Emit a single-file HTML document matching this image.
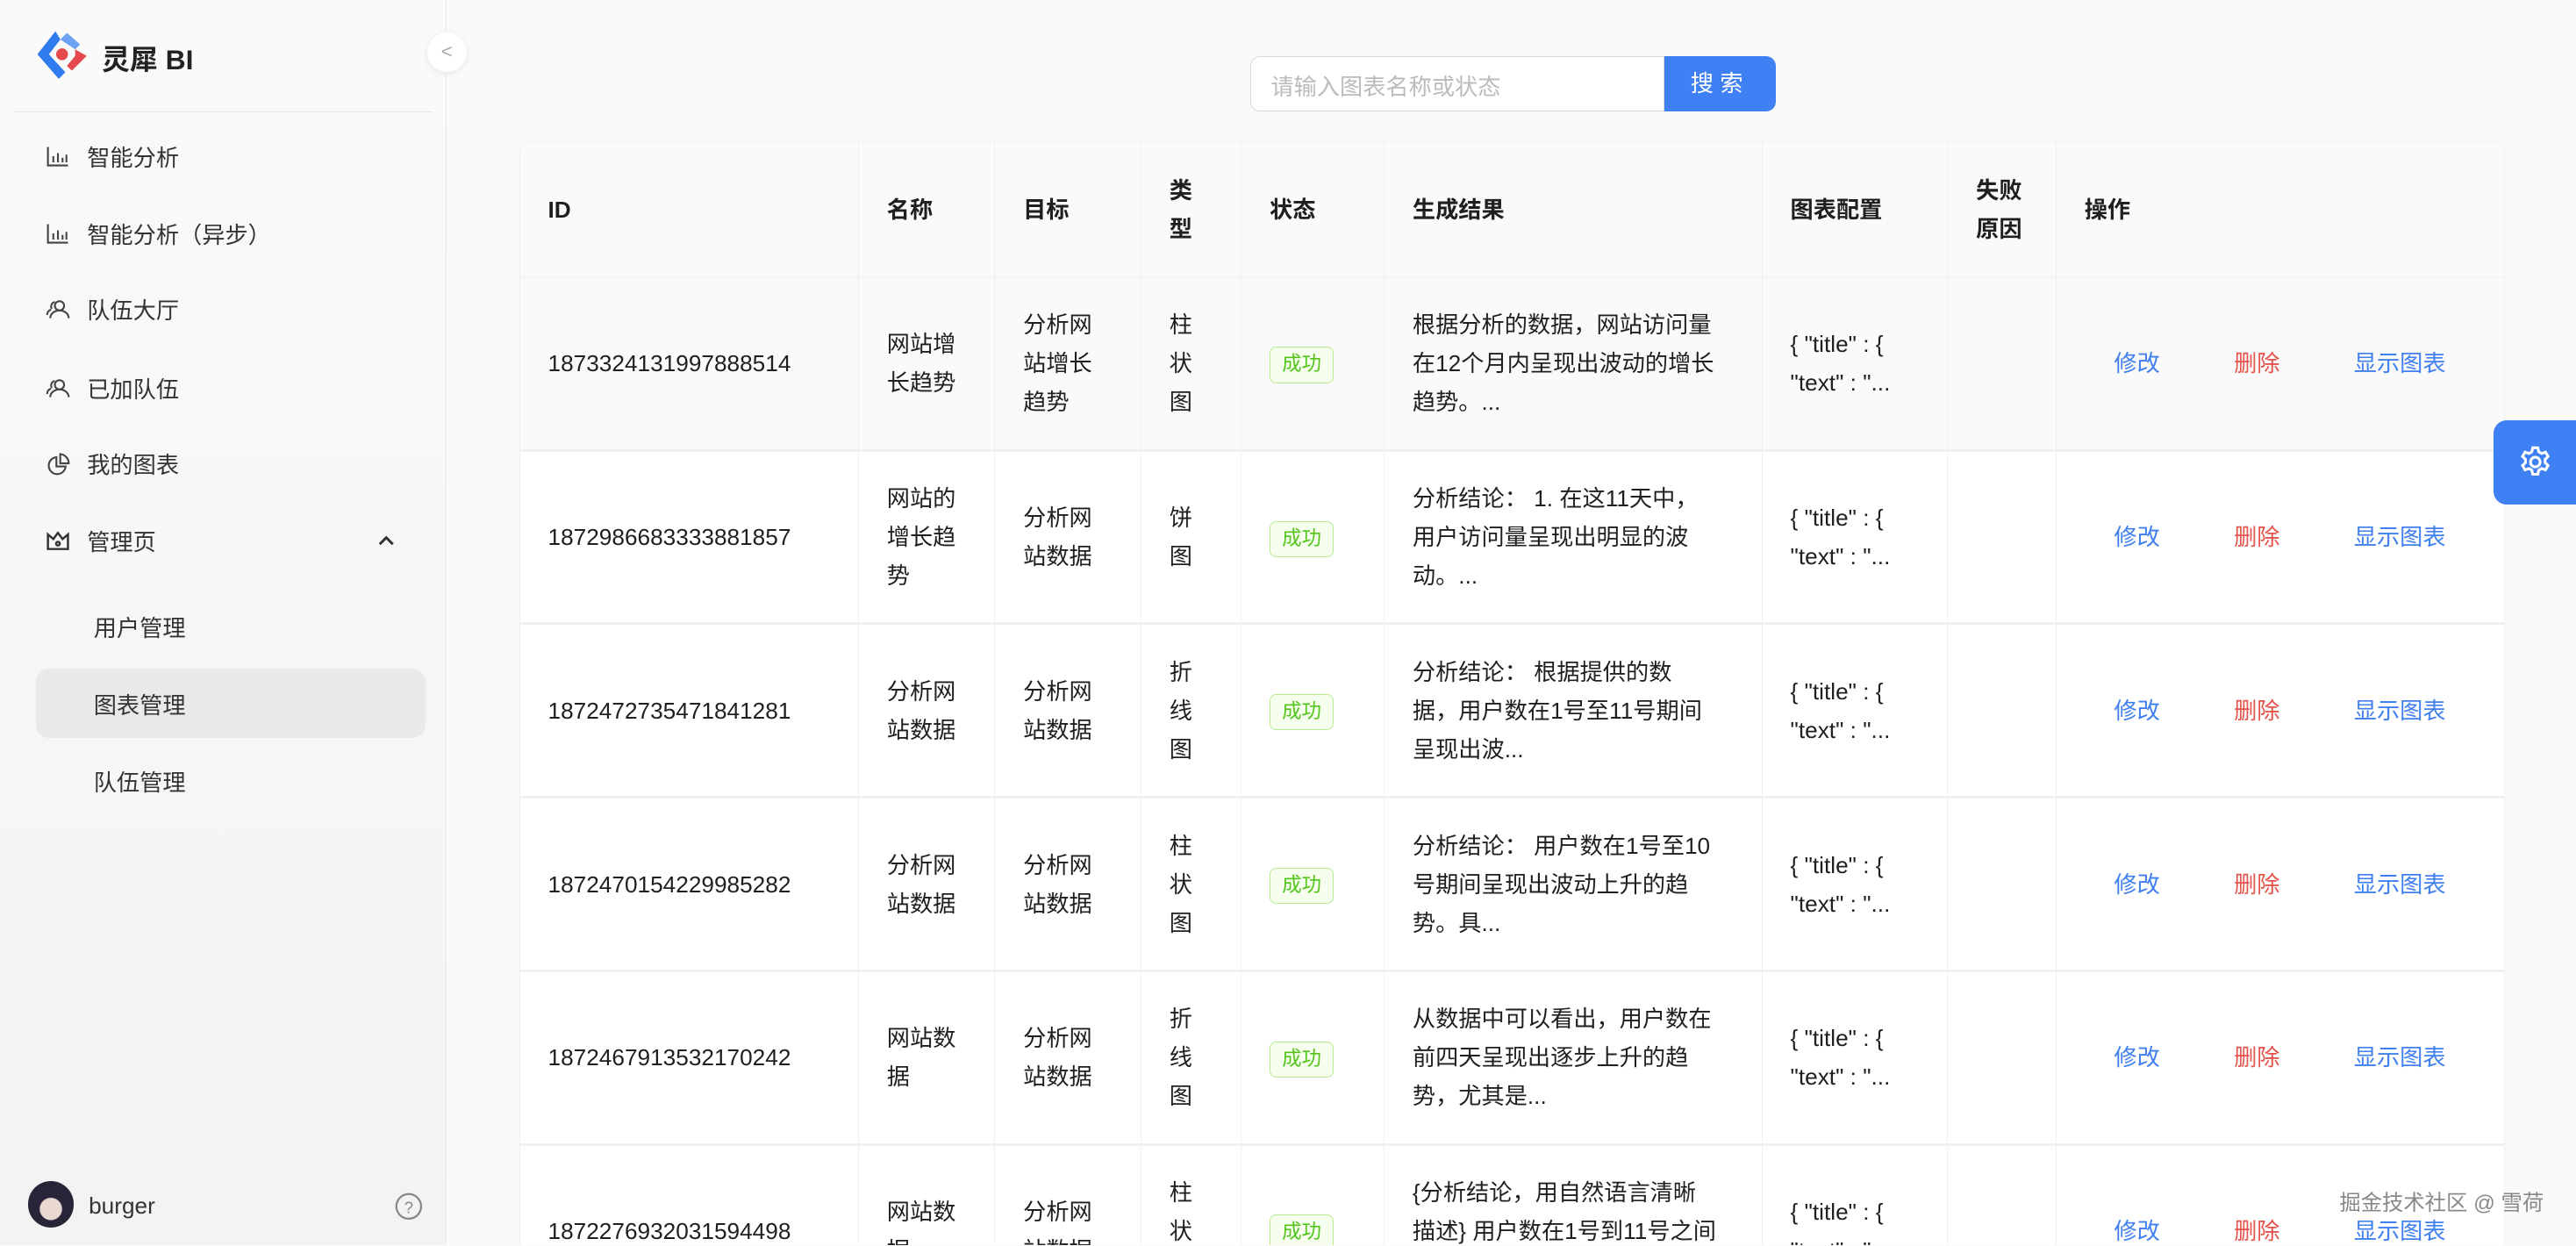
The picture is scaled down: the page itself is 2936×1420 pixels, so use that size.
<!DOCTYPE html>
<html><head><meta charset="utf-8"><style>
html{zoom:1.87245;height:758px;overflow:hidden}
*{box-sizing:border-box;margin:0;padding:0}
body{width:1568px;height:758px;overflow:hidden;position:relative;background:#fafafa;font-family:"Liberation Sans","Noto Sans CJK SC",sans-serif;color:#1f1f1f;font-size:14px}
.side{position:absolute;left:0;top:0;width:272px;height:758px;background:linear-gradient(#fafafa,#f3f3f3);border-right:1px solid #ebebeb}
.logo{position:absolute;left:20px;top:16px}
.brand{position:absolute;left:62px;top:23px;font-size:17px;font-weight:bold;color:#222}
.div{position:absolute;left:8px;right:8px;top:68px;border-top:1px solid #e8e8e8}
.mi{position:absolute;left:28px;height:20px;display:flex;align-items:center;color:#333;font-size:14px}
.mi svg{width:15px;height:15px;margin-right:10px}
.sub{position:absolute;left:57px;color:#333;font-size:14px}
.sel{position:absolute;left:22px;top:407px;width:237px;height:42px;background:#e9e9e9;border-radius:8px}
.coll{position:absolute;left:260px;top:20px;width:24px;height:24px;border-radius:50%;background:#fff;box-shadow:0 1px 4px rgba(0,0,0,.08);color:#aaa;font-size:12px;text-align:center;line-height:23px}
.search{position:absolute;left:761px;top:34px;width:252px;height:34px;border:1px solid #d9d9d9;border-radius:6px 0 0 6px;background:#fff;color:#bbb;font-size:14px;padding:7px 12px}
.btn{position:absolute;left:1013px;top:34px;width:68px;height:34px;background:#4080f5;color:#fff;border-radius:0 6px 6px 0;text-align:center;line-height:34px;font-size:14px;letter-spacing:4px}
.tw{position:absolute;left:316px;top:86px;width:1209px;height:672px;border:1px solid #f0f0f0;border-bottom:none;border-radius:8px 8px 0 0;overflow:hidden;background:#fff}
table{width:1209px;border-collapse:collapse;table-layout:fixed;background:#fff}
th{background:#fafafa;height:82px;text-align:left;font-weight:bold;padding:0 17px;border-right:1px solid #f0f0f0;border-bottom:1px solid #f0f0f0;line-height:23.5px;font-size:14px;color:#1f1f1f}
td{height:105.6px;padding:0 17px;border-right:1px solid #f0f0f0;border-bottom:2px solid #f0f0f0;line-height:23.5px;white-space:nowrap;color:#1f1f1f}
th:last-child,td:last-child{border-right:none}
tr.g td{background:#fafafa}
.tag{display:inline-block;border:1px solid #b7eb8f;background:#f6ffed;color:#52c41a;font-size:12px;height:22px;line-height:20px;padding:0 7px;border-radius:4px}
.ops{padding-left:35px}
.ops span{display:inline-block;margin-right:45px;color:#3f7ff0}
.ops span.r{color:#e5534b}
.gear{position:absolute;left:1518px;top:256px;width:50px;height:51px;background:#4080f5;border-radius:8px 0 0 8px;display:flex;align-items:center;justify-content:center}
.wm{position:absolute;left:1424px;top:722px;color:#888;font-size:13px}
.av{position:absolute;left:17px;top:719px;width:28px;height:28px;border-radius:50%;background:radial-gradient(circle at 50% 60%,#e8d8d0 0 30%,#2a2438 32%)}
</style></head><body>
<div class="side">
 <svg class="logo" width="36" height="36" viewBox="0 0 36 36"><path d="M14 3 L3 17 L16 32 L20 28 L10 17 L17 8 Z" fill="#2f7cf0"/><path d="M17 8 L21 4 L29 11 L26 14 Z" fill="#2f7cf0" opacity=".7"/><path d="M26 14 L33 18 L24 27 L21 24 L26 18 Z" fill="#e5484d"/><circle cx="18" cy="17" r="3.6" fill="#e5484d"/></svg>
 <div class="brand">灵犀 BI</div>
 <div class="div"></div>
 <div class="coll">&lt;</div>
 <div class="mi" style="top:85px"><svg viewBox="0 0 16 16" fill="none" stroke="#444" stroke-width="1.2"><path d="M1.5 2v12h13M5 12V8M8 12V6M11 12V9M13.5 12V7"/></svg>智能分析</div>
 <div class="mi" style="top:132px"><svg viewBox="0 0 16 16" fill="none" stroke="#444" stroke-width="1.2"><path d="M1.5 2v12h13M5 12V8M8 12V6M11 12V9M13.5 12V7"/></svg>智能分析（异步）</div>
 <div class="mi" style="top:178px"><svg viewBox="0 0 16 16" fill="none" stroke="#444" stroke-width="1.2"><circle cx="9" cy="6" r="3"/><path d="M3 14c0-3 3-5 6-5s6 2 6 5M6 3.5a3 3 0 0 0-2 4.5M1 12c0-2 1-3 2.5-3.5"/></svg>队伍大厅</div>
 <div class="mi" style="top:226px"><svg viewBox="0 0 16 16" fill="none" stroke="#444" stroke-width="1.2"><circle cx="9" cy="6" r="3"/><path d="M3 14c0-3 3-5 6-5s6 2 6 5M6 3.5a3 3 0 0 0-2 4.5M1 12c0-2 1-3 2.5-3.5"/></svg>已加队伍</div>
 <div class="mi" style="top:272px"><svg viewBox="0 0 16 16" fill="none" stroke="#444" stroke-width="1.2"><path d="M7 4a5.5 5.5 0 1 0 6 6H7Z"/><path d="M9.5 2v6h5.5a6 6 0 0 0-5.5-6Z"/></svg>我的图表</div>
 <div class="mi" style="top:319px"><svg viewBox="0 0 16 16" fill="none" stroke="#333" stroke-width="1.4"><path d="M1.5 4l3.5 3 3-4 3 4 3.5-3v9.5h-13Z"/><circle cx="8" cy="10" r="1.2"/></svg>管理页</div>
 <svg style="position:absolute;left:229px;top:325px" width="12" height="8" viewBox="0 0 12 8"><path d="M2 6l4-4 4 4" stroke="#333" stroke-width="1.6" fill="none"/></svg>
 <div class="sub" style="top:371px">用户管理</div>
 <div class="sel"></div>
 <div class="sub" style="top:418px">图表管理</div>
 <div class="sub" style="top:465px">队伍管理</div>
 <div class="av"></div>
 <div style="position:absolute;left:54px;top:726px;color:#333">burger</div>
 <svg style="position:absolute;left:240px;top:725px" width="18" height="18" viewBox="0 0 18 18"><circle cx="9" cy="9" r="7.5" fill="none" stroke="#888" stroke-width="1.2"/><text x="9" y="13" font-size="10" text-anchor="middle" fill="#888" font-family="Liberation Sans">?</text></svg>
</div>
<div class="search">请输入图表名称或状态</div>
<div class="btn">搜索</div>
<div class="tw">
<table>
<colgroup><col style="width:206px"><col style="width:83px"><col style="width:89px"><col style="width:61px"><col style="width:87px"><col style="width:230px"><col style="width:113px"><col style="width:66px"><col style="width:274px"></colgroup>
<tr><th>ID</th><th>名称</th><th>目标</th><th>类型</th><th>状态</th><th>生成结果</th><th>图表配置</th><th>失败原因</th><th>操作</th></tr>
<tr class="g"><td>1873324131997888514</td><td>网站增<br>长趋势</td><td>分析网<br>站增长<br>趋势</td><td>柱<br>状<br>图</td><td><span class="tag">成功</span></td><td>根据分析的数据，网站访问量<br>在12个月内呈现出波动的增长<br>趋势。...</td><td>{ "title" : {<br>"text" : "...</td><td></td><td class="ops"><span>修改</span><span class="r">删除</span><span>显示图表</span></td></tr>
<tr><td>1872986683333881857</td><td>网站的<br>增长趋<br>势</td><td>分析网<br>站数据</td><td>饼<br>图</td><td><span class="tag">成功</span></td><td>分析结论： 1. 在这11天中，<br>用户访问量呈现出明显的波<br>动。...</td><td>{ "title" : {<br>"text" : "...</td><td></td><td class="ops"><span>修改</span><span class="r">删除</span><span>显示图表</span></td></tr>
<tr><td>1872472735471841281</td><td>分析网<br>站数据</td><td>分析网<br>站数据</td><td>折<br>线<br>图</td><td><span class="tag">成功</span></td><td>分析结论： 根据提供的数<br>据，用户数在1号至11号期间<br>呈现出波...</td><td>{ "title" : {<br>"text" : "...</td><td></td><td class="ops"><span>修改</span><span class="r">删除</span><span>显示图表</span></td></tr>
<tr><td>1872470154229985282</td><td>分析网<br>站数据</td><td>分析网<br>站数据</td><td>柱<br>状<br>图</td><td><span class="tag">成功</span></td><td>分析结论： 用户数在1号至10<br>号期间呈现出波动上升的趋<br>势。具...</td><td>{ "title" : {<br>"text" : "...</td><td></td><td class="ops"><span>修改</span><span class="r">删除</span><span>显示图表</span></td></tr>
<tr><td>1872467913532170242</td><td>网站数<br>据</td><td>分析网<br>站数据</td><td>折<br>线<br>图</td><td><span class="tag">成功</span></td><td>从数据中可以看出，用户数在<br>前四天呈现出逐步上升的趋<br>势，尤其是...</td><td>{ "title" : {<br>"text" : "...</td><td></td><td class="ops"><span>修改</span><span class="r">删除</span><span>显示图表</span></td></tr>
<tr><td>1872276932031594498</td><td>网站数<br>据</td><td>分析网<br>站数据</td><td>柱<br>状<br>图</td><td><span class="tag">成功</span></td><td>{分析结论，用自然语言清晰<br>描述} 用户数在1号到11号之间<br>...</td><td>{ "title" : {<br>"text" : "...</td><td></td><td class="ops"><span>修改</span><span class="r">删除</span><span>显示图表</span></td></tr>
</table>
</div>
<div class="gear"><svg width="22" height="22" viewBox="0 0 24 24" fill="none" stroke="#fff" stroke-width="1.8"><circle cx="12" cy="12" r="3.2"/><path d="M10.3 2.5h3.4l.6 2.7 1.9 1.1 2.6-.9 1.7 2.9-2 1.9v2.2l2 1.9-1.7 2.9-2.6-.9-1.9 1.1-.6 2.7h-3.4l-.6-2.7-1.9-1.1-2.6.9-1.7-2.9 2-1.9v-2.2l-2-1.9 1.7-2.9 2.6.9 1.9-1.1Z"/></svg></div>
<div class="wm">掘金技术社区 @ 雪荷</div>
</body></html>
